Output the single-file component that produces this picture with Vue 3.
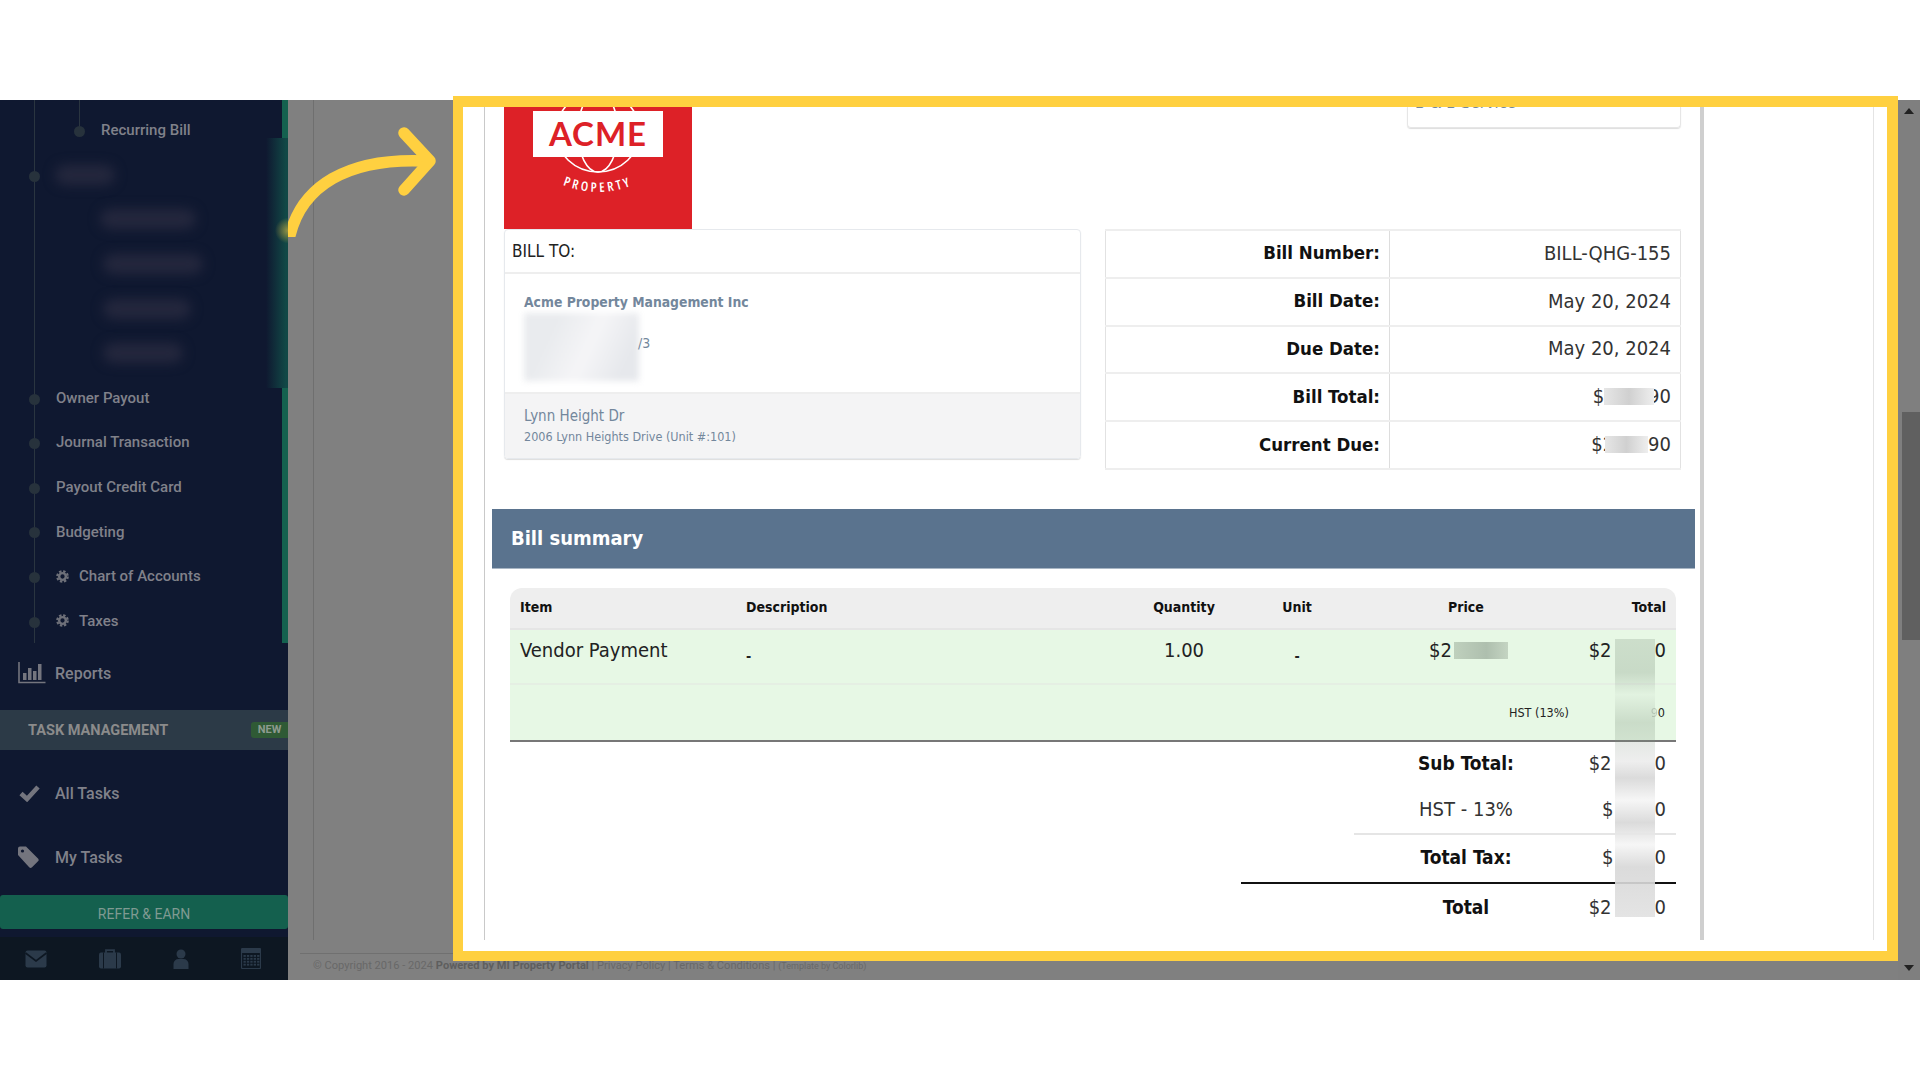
<script setup>
const treeRows = [
  { label: 'Recurring Bill', sub: true },
  { blur: 60, x: 55, top: true },
  { blur: 96, x: 100, nodot: true },
  { blur: 100, x: 103, nodot: true },
  { blur: 88, x: 103, nodot: true },
  { blur: 80, x: 103, nodot: true },
  { label: 'Owner Payout' },
  { label: 'Journal Transaction' },
  { label: 'Payout Credit Card' },
  { label: 'Budgeting' },
  { label: 'Chart of Accounts', gear: true },
  { label: 'Taxes', gear: true },
];

const billInfo = [
  { label: 'Bill Number:', value: 'BILL-QHG-155' },
  { label: 'Bill Date:', value: 'May 20, 2024' },
  { label: 'Due Date:', value: 'May 20, 2024' },
  { label: 'Bill Total:', pre: '$', post: '90', gap: 50, pull: 0, push: -6 },
  { label: 'Current Due:', pre: '$2', post: '90', gap: 43, pull: -9, push: 0 },
];

const calendarCells = [];
for (let r = 0; r < 4; r++) {
  for (let c = 0; c < 5; c++) {
    calendarCells.push({ x: 2.5 + c * 3.4, y: 7 + r * 2.9 });
  }
}
</script>

<template>
  <div class="app">
    <aside class="sidebar">
      <div class="tree">
        <div
          v-for="(row, i) in treeRows"
          :key="i"
          class="tree-row"
          :class="{ sub: row.sub }"
        >
          <i v-if="!row.nodot" class="dot" :class="{ 'dot-sub': row.sub }"></i>
          <span
            v-if="row.blur"
            class="blur-bar"
            :style="{ width: row.blur + 'px', marginLeft: row.x - 56 + 'px' }"
          ></span>
          <template v-else>
            <svg v-if="row.gear" class="gear" viewBox="0 0 14 14">
              <circle cx="7" cy="7" r="3.6" fill="none" stroke="#6e7079" stroke-width="2.6" />
              <circle cx="7" cy="7" r="5.6" fill="none" stroke="#6e7079" stroke-width="2.4" stroke-dasharray="2.6 1.8" />
            </svg>
            <span>{{ row.label }}</span>
          </template>
        </div>
        <div class="stripe-blur"></div>
      </div>

      <div class="nav-row reports">
        <svg class="nav-icon" width="28" height="22" viewBox="0 0 28 22">
          <path d="M1 0v20.5h26.500" fill="none" stroke="#74757e" stroke-width="1.600" />
          <rect x="5" y="11" width="3.500" height="7" fill="#74757e" />
          <rect x="10" y="6" width="3.500" height="12" fill="#74757e" />
          <rect x="15" y="9" width="3.500" height="9" fill="#74757e" />
          <rect x="20" y="2" width="3.500" height="16" fill="#74757e" />
        </svg>
        <span>Reports</span>
      </div>

      <div class="task-band">
        <span>TASK MANAGEMENT</span>
        <em class="new-badge">NEW</em>
      </div>

      <div class="nav-row">
        <svg class="nav-icon" width="28" height="18" viewBox="0 0 28 18">
          <path d="M3 9.500l6 5.500L20 3" fill="none" stroke="#74757e" stroke-width="4.600" />
        </svg>
        <span>All Tasks</span>
      </div>
      <div class="nav-row">
        <svg class="nav-icon" width="28" height="22" viewBox="0 0 28 22">
          <path d="M0 2.500a2 2 0 0 1 2-2h6l12 12a2 2 0 0 1 0 2.800l-6 6a2 2 0 0 1-2.800 0L0 9z" fill="#74757e" />
          <circle cx="4.500" cy="5" r="1.600" fill="#0f1830" />
        </svg>
        <span>My Tasks</span>
      </div>

      <div class="refer-btn">REFER &amp; EARN</div>

      <div class="side-footer">
        <svg width="22" height="18" viewBox="0 0 22 18">
          <rect width="21" height="17" x="0.500" y="0.500" rx="2" fill="#2b3a4a" />
          <path d="M0.500 3l10.500 8 10.500-8" fill="none" stroke="#0d1722" stroke-width="1.600" />
        </svg>
        <svg width="22" height="20" viewBox="0 0 22 20">
          <rect x="0" y="3.500" width="22" height="16" rx="2" fill="#2b3a4a" />
          <path d="M7 4V1.200h8V4" fill="none" stroke="#2b3a4a" stroke-width="1.800" />
          <path d="M4.500 3.500v16M17.500 3.500v16" stroke="#0d1722" stroke-width="1" />
        </svg>
        <svg width="16" height="20" viewBox="0 0 16 20">
          <circle cx="8" cy="5" r="4.500" fill="#2b3a4a" />
          <path d="M0.500 20v-5a5 5 0 0 1 5-5h5a5 5 0 0 1 5 5v5z" fill="#2b3a4a" />
        </svg>
        <svg width="20" height="21" viewBox="0 0 20 21">
          <rect x="0.500" y="0.500" width="19" height="20" rx="1" fill="none" stroke="#2b3a4a" stroke-width="1.200" />
          <rect x="1" y="1" width="18" height="4" fill="#2b3a4a" />
          <rect v-for="(c, i) in calendarCells" :key="i" :x="c.x" :y="c.y" width="2.300" height="1.900" fill="#2b3a4a" />
        </svg>
      </div>
    </aside>

    <main class="main">
      <div class="dim-page">
        <div class="dim-content"></div>
        <footer class="dim-footer">
          © Copyright 2016 - 2024 <b>Powered by MI Property Portal</b> | Privacy Policy | Terms &amp; Conditions | <small>(Template by Colorlib)</small>
        </footer>
      </div>
      <div class="scrollbar">
        <span class="arrow-up"></span>
        <span class="thumb"></span>
        <span class="arrow-down"></span>
      </div>
    </main>

    <!-- highlighted part of the page -->
    <section class="spotlight">
      <div class="outer">
        <div class="sheet">
          <div class="top-row">
            <svg class="logo" width="188" height="122" viewBox="0 0 188 122">
              <rect width="188" height="122" fill="#dd2127" />
              <ellipse cx="94" cy="25" rx="42" ry="40" fill="none" stroke="#fff" stroke-width="1.600" />
              <ellipse cx="94" cy="25" rx="20" ry="40" fill="none" stroke="#fff" stroke-width="1.600" />
              <rect x="29" y="4" width="130" height="46" fill="#fff" />
              <text x="94" y="38.500" text-anchor="middle" class="acme">ACME</text>
              <path id="prop-arc" d="M46 72 Q94 98 142 72" fill="none" />
              <text class="prop"><textPath href="#prop-arc" startOffset="50%" text-anchor="middle">PROPERTY</textPath></text>
            </svg>
            <div class="vendor-box"><span>B &amp; B Service</span></div>
          </div>

          <div class="info-row">
            <div class="bill-to">
              <div class="bill-head">BILL TO:</div>
              <div class="bill-body">
                <div class="bill-name">Acme Property Management Inc</div>
                <div class="bill-addr">
                  <span class="addr-blur"></span>
                  <span class="addr-tail">/3</span>
                </div>
              </div>
              <div class="bill-foot">
                <div class="foot-title">Lynn Height Dr</div>
                <div class="foot-sub">2006 Lynn Heights Drive (Unit #:101)</div>
              </div>
            </div>

            <table class="info-table">
              <tbody>
                <tr v-for="row in billInfo" :key="row.label">
                  <th>{{ row.label }}</th>
                  <td>
                    <template v-if="row.value">{{ row.value }}</template>
                    <template v-else>
                      {{ row.pre }}<span class="mask" :style="{ width: row.gap + 'px', marginLeft: row.pull + 'px', marginRight: row.push + 'px' }"></span>{{ row.post }}
                    </template>
                  </td>
                </tr>
              </tbody>
            </table>
          </div>

          <div class="summary-bar">Bill summary</div>

          <div class="items">
            <table class="items-table">
              <thead>
                <tr>
                  <th class="c-item">Item</th>
                  <th class="c-desc">Description</th>
                  <th class="c-qty">Quantity</th>
                  <th class="c-unit">Unit</th>
                  <th class="c-price">Price</th>
                  <th class="c-total">Total</th>
                </tr>
              </thead>
              <tbody>
                <tr class="line">
                  <td class="c-item">Vendor Payment</td>
                  <td class="c-desc"><span class="dash">-</span></td>
                  <td class="c-qty">1.00</td>
                  <td class="c-unit"><span class="dash">-</span></td>
                  <td class="c-price"><span class="price-inner">$2<span class="mask green"></span></span></td>
                  <td class="c-total">$2<span class="gap"></span>0</td>
                </tr>
                <tr class="tax-line">
                  <td colspan="4"></td>
                  <td colspan="2">
                    <div class="tax-cell"><span>HST (13%)</span><span><span class="faint">9</span>0</span></div>
                  </td>
                </tr>
              </tbody>
            </table>

            <div class="totals">
              <div class="t-row strong"><span>Sub Total:</span><span>$2<i class="gap"></i>0</span></div>
              <div class="t-row"><span>HST - 13%</span><span>$<i class="gap narrow"></i>0</span></div>
              <div class="t-row strong ruled"><span>Total Tax:</span><span>$<i class="gap narrow"></i>0</span></div>
              <div class="t-row strong grand"><span>Total</span><span>$2<i class="gap"></i>0</span></div>
            </div>

            <div class="blur-strip"></div>
          </div>
        </div>
      </div>
    </section>

    <svg class="arrow" width="160" height="110" viewBox="0 0 160 110">
      <path d="M2 108C14 60 58 30 139 34" fill="none" stroke="#ffd040" stroke-width="11.500" stroke-linecap="round" />
      <path d="M116 6l26 28-26 29" fill="none" stroke="#ffd040" stroke-width="11.500" stroke-linecap="round" stroke-linejoin="round" />
    </svg>
  </div>
</template>

<style scoped>
.app {
  position: relative;
  display: flex;
  height: 880px;
  margin-top: 100px;
  margin-bottom: 100px;
  font-family: Roboto, "Liberation Sans", sans-serif;
}

/* sidebar */
.sidebar {
  display: flex;
  flex-direction: column;
  width: 288px;
  flex-shrink: 0;
  background: #0f1830;
  color: #80818a;
}
.tree {
  position: relative;
  height: 543px;
  padding-top: 8px;
  box-sizing: border-box;
  border-right: 6px solid #14614f;
}
.tree::before {
  content: '';
  position: absolute;
  left: 34px;
  top: 0;
  bottom: 0;
  width: 1px;
  background: #2a3540;
}
.tree-row {
  position: relative;
  display: flex;
  align-items: center;
  gap: 10px;
  height: 44.6px;
  padding-left: 56px;
  font-size: 15px;
  font-weight: 500;
}
.tree-row.sub {
  padding-left: 101px;
}
.tree-row.sub::before {
  content: '';
  position: absolute;
  left: 79px;
  top: -8px;
  height: 32px;
  width: 1px;
  background: #2a3540;
}
.dot {
  position: absolute;
  left: 29px;
  top: 18px;
  width: 11px;
  height: 11px;
  border-radius: 50%;
  background: #27323c;
}
.dot-sub {
  left: 74px;
}
.blur-bar {
  height: 20px;
  border-radius: 10px;
  background: #24273d;
  filter: blur(6px);
}
.gear {
  width: 13px;
  height: 13px;
  flex-shrink: 0;
}
.stripe-blur {
  position: absolute;
  right: -6px;
  top: 38px;
  width: 22px;
  height: 250px;
  background:
    radial-gradient(circle at 100% 37%, rgba(255, 208, 64, .55), rgba(255, 208, 64, 0) 13px),
    linear-gradient(to right, #0f1830, #114846 90%);
}
.nav-row {
  display: flex;
  align-items: center;
  height: 64px;
  padding-left: 18px;
  font-size: 16px;
  font-weight: 500;
}
.nav-row.reports {
  height: 60px;
}
.nav-icon {
  width: 28px;
  margin-right: 9px;
  flex-shrink: 0;
}
.task-band {
  display: flex;
  align-items: center;
  justify-content: space-between;
  height: 40px;
  margin-top: 7px;
  margin-bottom: 11px;
  padding-left: 28px;
  background: #2c3a47;
  color: #8b8b8b;
  font-size: 14.500px;
  font-weight: 700;
}
.new-badge {
  width: 37px;
  height: 16px;
  border-radius: 3px 0 0 3px;
  background: #2f5a35;
  color: #8d9a8f;
  font-size: 11px;
  font-weight: 700;
  font-style: normal;
  line-height: 16px;
  text-align: center;
}
.refer-btn {
  height: 34px;
  margin-top: 6px;
  border-radius: 3px;
  background: #14604e;
  color: #7f9a92;
  font-size: 14px;
  line-height: 38px;
  text-align: center;
}
.side-footer {
  display: flex;
  align-items: center;
  justify-content: space-between;
  height: 43px;
  margin-top: 8px;
  padding: 0 27px 0 25px;
  background: #0d1722;
}

/* dimmed page behind the highlight */
.main {
  flex: 1;
  display: flex;
  background: #808080;
}
.dim-page {
  flex: 1;
  min-width: 0;
}
.dim-content {
  height: 840px;
  margin-left: 25px;
  border-left: 1px solid #6f6f6f;
}
.dim-footer {
  margin-top: 13px;
  margin-left: 12px;
  padding: 4px 0 0 13px;
  border-top: 1px solid #707070;
  color: #686868;
  font-size: 11.100px;
  line-height: 16px;
}
.dim-footer b {
  color: #5e5e5e;
}
.dim-footer small {
  font-size: 9px;
}
.scrollbar {
  position: relative;
  width: 22px;
  background: #7f7f7f;
}
.arrow-up,
.arrow-down {
  position: absolute;
  left: 6px;
  width: 0;
  height: 0;
  border-left: 5px solid transparent;
  border-right: 5px solid transparent;
}
.arrow-up {
  top: 8px;
  border-bottom: 6px solid #222;
}
.arrow-down {
  bottom: 9px;
  border-top: 6px solid #222;
}
.thumb {
  position: absolute;
  left: 4px;
  right: 0;
  top: 312px;
  height: 228px;
  background: #606060;
}

/* highlighted frame */
.spotlight {
  position: absolute;
  left: 453px;
  top: -4px;
  width: 1445px;
  height: 865px;
  box-sizing: border-box;
  border: solid #ffd040;
  border-width: 11px 11px 10px 10px;
  background: #fff;
  overflow: hidden;
}
.outer {
  width: 1411px;
  height: 833px;
  box-sizing: border-box;
  padding-left: 21px;
  border-right: 1px solid #e4e4e4;
}
.sheet {
  position: relative;
  width: 1220px;
  height: 100%;
  box-sizing: border-box;
  padding-left: 19px;
  border-left: 1px solid #c9c9c9;
  border-right: 4px solid #cfcfcf;
  font-family: "DejaVu Sans", sans-serif;
  font-stretch: condensed;
  color: #222;
}
.top-row {
  display: flex;
  justify-content: space-between;
  height: 122px;
  width: 1177px;
}
.logo {
  display: block;
}
.acme {
  font-family: Lato, sans-serif;
  font-size: 33px;
  font-weight: 700;
  font-stretch: normal;
  letter-spacing: 1px;
  fill: #dd2127;
}
.prop {
  font-family: "Open Sans", sans-serif;
  font-size: 13px;
  font-weight: 600;
  letter-spacing: 3px;
  fill: #fff;
}
.vendor-box {
  width: 274px;
  height: 21px;
  box-sizing: border-box;
  padding-left: 7px;
  border: 1px solid #e6e6e6;
  border-top: none;
  border-radius: 0 0 4px 4px;
  box-shadow: 0 1px 1px #ddd;
  overflow: hidden;
  color: #73879c;
  font-size: 16.500px;
  line-height: 20px;
}
.vendor-box span {
  display: block;
  margin-top: -14px;
}
.info-row {
  display: flex;
  align-items: flex-start;
  justify-content: space-between;
  width: 1177px;
  height: 280px;
}
.bill-to {
  width: 577px;
  height: 230px;
  box-sizing: border-box;
  border: 1px solid #e6e9ed;
  border-radius: 4px;
  box-shadow: 0 1px 1px #ddd;
  overflow: hidden;
}
.bill-head {
  height: 44px;
  padding-left: 7px;
  border-bottom: 2px solid #eee;
  box-sizing: border-box;
  color: #222;
  font-size: 17px;
  line-height: 43px;
}
.bill-body {
  height: 118px;
  box-sizing: border-box;
  padding: 18px 19px 0;
  color: #73879c;
}
.bill-name {
  font-size: 13.800px;
  font-weight: 700;
  line-height: 20px;
}
.bill-addr {
  position: relative;
  height: 70px;
}
.addr-blur {
  position: absolute;
  left: 0;
  top: 1px;
  width: 115px;
  height: 68px;
  background: linear-gradient(115deg, #e9ebee 25%, #f5f5f7 55%, #e6e8ec 85%);
  filter: blur(3px);
}
.addr-tail {
  position: absolute;
  left: 114px;
  top: 23px;
  font-size: 14px;
}
.bill-foot {
  height: 70px;
  box-sizing: border-box;
  padding: 12px 19px 0;
  border-top: 2px solid #eee;
  background: #f4f4f5;
  color: #73879c;
}
.foot-title {
  font-size: 15px;
  line-height: 20px;
}
.foot-sub {
  margin-top: 1px;
  font-size: 12.500px;
  line-height: 19px;
}
.info-table {
  width: 576px;
  height: 240px;
  border-collapse: collapse;
  border: 1px solid #e2e2e2;
  border-bottom: 2px solid #eee;
  border-top: 2px solid #eee;
  table-layout: fixed;
}
.info-table tr {
  height: 47.800px;
  border-bottom: 2px solid #eee;
}
.info-table th,
.info-table td {
  box-sizing: border-box;
  padding: 0 9px 2px;
  font-size: 20px;
  text-align: right;
  color: #111;
}
.info-table th {
  width: 284px;
  font-size: 18.500px;
  font-weight: 700;
  border-right: 1px solid #ddd;
}
.info-table td {
  font-weight: 400;
  color: #333;
}
.mask {
  position: relative;
  z-index: 1;
  display: inline-block;
  height: 17px;
  vertical-align: -2px;
  background: linear-gradient(to right, #e6e6e6, #d0d0d0 50%, #eee);
}
.summary-bar {
  width: 1203px;
  height: 60px;
  margin-left: -12px;
  box-sizing: border-box;
  padding-left: 19px;
  border-bottom: 1px solid #a9b6c4;
  background: #5a738e;
  color: #fff;
  font-size: 20px;
  font-weight: 700;
  line-height: 59px;
}
.items {
  position: relative;
  width: 1166px;
  margin-left: 6px;
  margin-top: 19px;
}
.items-table {
  width: 100%;
  border-collapse: separate;
  border-spacing: 0;
  table-layout: fixed;
}
.items-table th,
.items-table td {
  box-sizing: border-box;
  padding-top: 0;
  padding-bottom: 0;
}
.items-table th {
  height: 42px;
  padding-bottom: 3px;
  background: #eee;
  border-bottom: 2px solid #e5e5e5;
  color: #111;
  font-size: 14px;
  font-weight: 700;
}
.items-table th:first-child {
  border-top-left-radius: 12px;
}
.items-table th:last-child {
  border-top-right-radius: 12px;
}
.items-table .line td {
  height: 55px;
  padding-bottom: 13px;
  border-bottom: 2px solid #e5efe3;
  background: #e7f8e5;
  color: #222;
  font-size: 20px;
}
.tax-line td {
  height: 57px;
  border-bottom: 2px solid #777;
  background: #e7f8e5;
}
.items-table .c-item,
.items-table .c-desc {
  padding-left: 10px;
  padding-right: 0;
  text-align: left;
}
.c-item {
  width: 226px;
}
.c-desc {
  width: 358px;
}
.c-qty {
  width: 180px;
  text-align: center;
}
.c-unit {
  width: 46px;
  text-align: center;
}
.items-table .c-price {
  width: 260px;
  padding-left: 32px;
  padding-right: 0;
  text-align: center;
}
.items-table .c-total {
  padding-left: 0;
  padding-right: 10px;
  text-align: right;
  white-space: nowrap;
}
.dash {
  font-size: 14px;
  font-weight: 700;
  vertical-align: -5px;
}
.price-inner {
  display: inline-flex;
  align-items: center;
  margin-left: 5px;
}
.mask.green {
  width: 54px;
  margin-left: 2px;
  background: linear-gradient(to right, #bfd0bd, #aebfae 60%, #c4d4c2);
}
.gap {
  display: inline-block;
  width: 43px;
}
.gap.narrow {
  width: 41px;
}
.tax-cell {
  display: flex;
  justify-content: space-between;
  padding-left: 188px;
  padding-right: 10px;
  font-size: 12.500px;
  color: #222;
}
.faint {
  opacity: .2;
}
.totals {
  display: flex;
  flex-direction: column;
  align-items: flex-end;
}
.t-row {
  display: flex;
  justify-content: flex-end;
  align-items: center;
  width: 322px;
  height: 46px;
  box-sizing: border-box;
  color: #333;
  font-size: 20px;
}
.t-row > span:first-child {
  width: 200px;
  text-align: center;
}
.t-row > span:last-child {
  width: 110px;
  padding-right: 10px;
  box-sizing: border-box;
  text-align: right;
}
.t-row.strong > span:first-child {
  font-size: 19px;
  font-weight: 700;
  color: #111;
}
.t-row:nth-child(1) {
  height: 42px;
}
.t-row:nth-child(2) {
  height: 51px;
  padding-top: 1px;
  border-bottom: 2px solid #e5e5e5;
}
.t-row.ruled {
  width: 435px;
  height: 49px;
  padding-bottom: 3px;
  border-bottom: 2px solid #111;
}
.t-row.grand {
  height: 44px;
  padding-top: 1px;
}
.blur-strip {
  position: absolute;
  left: 1105px;
  top: 51px;
  width: 40px;
  height: 278px;
  background: linear-gradient(to bottom,
    rgba(120, 140, 120, .24) 0, rgba(120, 140, 120, .28) 12%, rgba(205, 220, 205, .2) 20%,
    rgba(120, 140, 120, .26) 30%, rgba(120, 140, 120, .2) 37%, rgba(235, 235, 235, .85) 44%,
    rgba(215, 215, 215, .9) 50%, rgba(245, 245, 245, .9) 58%, rgba(215, 215, 215, .9) 66%,
    rgba(245, 245, 245, .9) 74%, rgba(215, 215, 215, .9) 82%, rgba(225, 225, 225, .9) 100%);
}
.arrow {
  position: absolute;
  left: 288px;
  top: 27px;
}
</style>

<style>
html, body {
  background: #fff;
}
</style>
